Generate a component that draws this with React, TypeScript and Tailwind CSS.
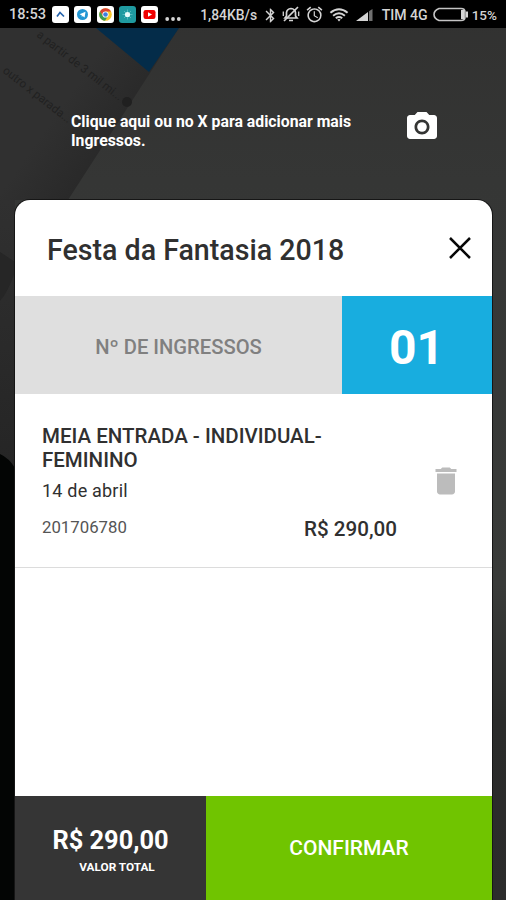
import React from "react";
import { MdBluetooth, MdAlarm, MdDelete, MdCameraAlt } from "react-icons/md";

const BACKDROP_LINES = [
  { text: "a partir de 3 mil mi...", x: 36, y: 36, angle: 38 },
  { text: "outro x parada...", x: 2, y: 72, angle: 38 },
];

function Backdrop() {
  return (
    <svg className="absolute inset-0 h-[900px] w-[506px]" viewBox="0 0 506 900" aria-hidden="true">
      <defs>
        <linearGradient id="base" x1="0" y1="0" x2="0" y2="1">
          <stop offset="0" stopColor="#313130" />
          <stop offset="0.2" stopColor="#353635" />
          <stop offset="0.65" stopColor="#393b39" />
          <stop offset="0.8" stopColor="#2a2b2a" />
          <stop offset="1" stopColor="#2c2c2c" />
        </linearGradient>
        <linearGradient id="paper" gradientUnits="userSpaceOnUse" x1="80" y1="80" x2="130" y2="115">
          <stop offset="0" stopColor="#303030" />
          <stop offset="1" stopColor="#292929" />
        </linearGradient>
        <linearGradient id="left" x1="0" y1="0" x2="0" y2="1">
          <stop offset="0" stopColor="#303030" />
          <stop offset="1" stopColor="#252525" />
        </linearGradient>
      </defs>
      <rect width="506" height="900" fill="url(#base)" />
      <path d="M0 28H179L68 200H0Z" fill="url(#paper)" />
      <path d="M96 28H179L149 72Z" fill="#042c49" />
      <rect y="200" width="15" height="270" fill="url(#left)" />
      <path d="M0 252L15 262V272Q8 292 0 301Z" fill="#262626" />
      <path d="M0 454Q9 458 15 468V900H0Z" fill="#030504" />
      <g fill="#212121" fontFamily="Roboto, sans-serif" fontSize="11.6">
        {BACKDROP_LINES.map((l) => (
          <text key={l.text} transform={`translate(${l.x} ${l.y}) rotate(${l.angle})`}>{l.text}</text>
        ))}
      </g>
      <circle cx="127" cy="102" r="5" fill="#202020" />
    </svg>
  );
}

function AppTile({ className, children }: { className: string; children: React.ReactNode }) {
  return (
    <span className={`flex size-[17px] items-center justify-center rounded-[3px] ${className}`}>
      <svg className="size-[17px]" viewBox="0 0 17 17">{children}</svg>
    </span>
  );
}

function StatusBar() {
  return (
    <header className="relative flex h-[28px] items-center bg-black pt-[2px] pl-[9px] text-[15px] font-medium text-[#d4d4d4]">
      <span className="w-[43px] text-[14.6px] whitespace-nowrap">18:53</span>
      <div className="mb-[2px] flex gap-[5.3px]">
        <AppTile className="bg-white">
          <path d="M5 10.5L8 6.5L12 10.5" fill="none" stroke="#2462ac" strokeWidth="1.7" />
        </AppTile>
        <AppTile className="bg-white">
          <circle cx="8.5" cy="8.5" r="5.5" fill="#2296d3" />
          <path d="M5.5 8.3L11.5 5.8L10.6 11.4L8.7 10.1L7.8 11L7.7 9.3Z" fill="#fff" />
        </AppTile>
        <AppTile className="bg-white">
          <circle cx="8.5" cy="8.5" r="6.3" fill="#f7c72b" />
          <path d="M3 5.4A6.3 6.3 0 0 1 14 5.4H8.5L6 10Z" fill="#d94334" />
          <path d="M3 5.4A6.3 6.3 0 0 0 8 14.8L11 10L6 10Z" fill="#3a9b50" />
          <circle cx="8.5" cy="8.5" r="3.1" fill="#fff" />
          <circle cx="8.5" cy="8.5" r="2.3" fill="#3d7de0" />
        </AppTile>
        <AppTile className="bg-[#1f9aa0]">
          <path d="M8.5 3.5V13.5M3.5 8.5H13.5M5 5L12 12M12 5L5 12" stroke="#54b8bc" strokeWidth="1" />
          <circle cx="8.5" cy="8.5" r="2.6" fill="#e8fbfa" />
        </AppTile>
        <AppTile className="bg-white">
          <rect x="2.5" y="4" width="12" height="9" rx="2.2" fill="#f00000" />
          <path d="M7 6.2L11 8.5L7 10.8Z" fill="#fff" />
        </AppTile>
      </div>
      <svg className="mt-[7px] ml-[7px] h-[4px] w-[16px]" viewBox="0 0 16 4">
        <g fill="#d4d4d4"><circle cx="2.2" cy="2" r="1.9" /><circle cx="8" cy="2" r="1.9" /><circle cx="13.8" cy="2" r="1.9" /></g>
      </svg>
      <span className="ml-[19px] w-[62px] pt-[1px] text-[13.9px] whitespace-nowrap">1,84KB/s</span>
      <MdBluetooth className="h-[17px] w-[17px]" />
      <svg className="mb-[3px] ml-[2.5px] size-[18px]" viewBox="0 0 18 18" fill="none" stroke="#d4d4d4" strokeWidth="1.7">
        <path d="M3 13H15L13.5 11V7.5Q13 4 9 3.5Q5 4 4.5 7.5V11Z" />
        <path d="M7 15.5H11M2 16L16 2" />
        <path d="M1.3 6.5V11M16.7 6.5V11" strokeWidth="1.3" />
      </svg>
      <MdAlarm className="mb-[2px] ml-[5px] size-[19px]" />
      <svg className="mb-[1px] ml-[5px] h-[14px] w-[20px]" viewBox="0 0 20 14" fill="none" stroke="#d4d4d4" strokeWidth="2">
        <path d="M1.4 4.8Q10 -2.2 18.6 4.8M4.1 7.7Q10 2.9 15.9 7.7M6.8 10.3Q10 7.8 13.2 10.3" />
        <path d="M8.3 11.5Q10 10.4 11.7 11.5L10 13.5Z" fill="#d4d4d4" stroke="none" />
      </svg>
      <svg className="ml-[7px] h-[13px] w-[17px]" viewBox="0 0 17 13">
        <path d="M0 12L12 3V12Z" fill="#d4d4d4" />
        <path d="M13 2.2L16.5 0V12H13Z" fill="#707070" />
      </svg>
      <span className="ml-[9px] w-[48px] pt-[1px] text-[14.1px] whitespace-nowrap">TIM 4G</span>
      <svg className="mb-[1px] ml-[3px] h-[15px] w-[36px]" viewBox="0 0 36 15">
        <path d="M6 1.5H28Q32 1.5 32 5V10Q32 13.5 28 13.5H6Q1 11.5 1 7.5Q1 3.5 6 1.5Z" fill="none" stroke="#c4c4c4" strokeWidth="1.6" />
        <path d="M28 3H31.5V12H28ZM33 4.5H35V10.5H33Z" fill="#d4d4d4" />
      </svg>
      <span className="ml-[3px] text-[13.5px] whitespace-nowrap">15%</span>
    </header>
  );
}

function Ticket() {
  return (
    <section className="flex h-[174px] border-b border-[#dcdcdc] pl-[27px] text-[#303030]">
      <div className="w-[355px] pt-[31px]">
        <h2 className="text-[20.5px] leading-[23.5px] font-medium whitespace-nowrap">MEIA ENTRADA - INDIVIDUAL-<br />FEMININO</h2>
        <p className="mt-[8px] text-[18px] leading-[22px] tracking-[0.2px]">14 de abril</p>
        <div className="mt-[11px] flex items-center justify-between leading-[24px]">
          <span className="text-[16.8px] text-[#555]">201706780</span>
          <strong className="pt-[4px] text-[20.6px] font-medium">R$ 290,00</strong>
        </div>
      </div>
      <MdDelete className="mt-[69px] ml-[31px] size-[36px] text-[#bcbcbc]" />
    </section>
  );
}

export default function App() {
  return (
    <div className="relative h-[900px] w-[506px] overflow-hidden bg-[#343534] font-['Roboto',sans-serif]">
      <Backdrop />
      <StatusBar />
      <div className="relative flex h-[172px] pl-[71px] text-white">
        <p className="w-[333px] pt-[84px] text-[15.8px] leading-[19px] font-bold">Clique aqui ou no X para adicionar mais<br />Ingressos.</p>
        <MdCameraAlt className="mt-[81px] size-[36px]" />
      </div>
      <main className="relative ml-[15px] flex h-[700px] w-[477px] flex-col overflow-hidden rounded-t-[15px] bg-white shadow-[0_0_0_1px_#161616]">
        <div className="flex h-[96px] items-center justify-between pr-[21px] pl-[32px]">
          <h1 className="pt-[5px] text-[28.6px] font-medium text-[#303030]">Festa da Fantasia 2018</h1>
          <svg className="size-[22px]" viewBox="0 0 22 22"><path d="M1 1L21 21M21 1L1 21" stroke="#080808" strokeWidth="2.5" /></svg>
        </div>
        <div className="flex h-[98px]">
          <div className="flex w-[327px] items-center justify-center bg-[#dfdfdf] pt-[5px] text-[20.2px] font-medium text-[#808080]">Nº DE INGRESSOS</div>
          <div className="flex flex-1 items-center justify-center bg-[#18addf] pt-[5px] pr-[1px] text-[48px] font-bold text-white">01</div>
        </div>
        <Ticket />
        <div className="flex-1" />
        <footer className="flex h-[104px] text-white">
          <div className="flex w-[191px] flex-col items-center bg-[#353535] pt-[28px]">
            <strong className="text-[25.4px] leading-[32px] font-bold">R$ 290,00</strong>
            <span className="mt-[3px] ml-[13px] text-[11.8px] leading-[16px] font-bold">VALOR TOTAL</span>
          </div>
          <button className="flex-1 bg-[#70c400] pt-[2px] text-[21px] font-medium">CONFIRMAR</button>
        </footer>
      </main>
    </div>
  );
}
